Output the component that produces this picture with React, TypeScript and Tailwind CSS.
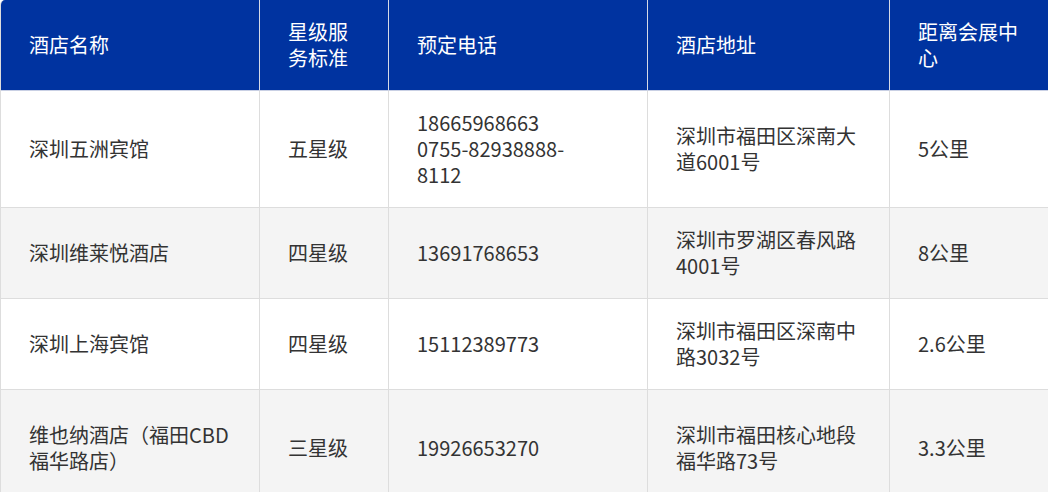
import React from 'react';

type Hotel = {
  name: string;
  star: string;
  phone: string[];
  address: string;
  distance: string;
};

const hotels: Hotel[] = [
  { name: '深圳五洲宾馆', star: '五星级', phone: ['18665968663', '0755-82938888-', '8112'], address: '深圳市福田区深南大道6001号', distance: '5公里' },
  { name: '深圳维莱悦酒店', star: '四星级', phone: ['13691768653'], address: '深圳市罗湖区春风路4001号', distance: '8公里' },
  { name: '深圳上海宾馆', star: '四星级', phone: ['15112389773'], address: '深圳市福田区深南中路3032号', distance: '2.6公里' },
  { name: '维也纳酒店（福田CBD福华路店）', star: '三星级', phone: ['19926653270'], address: '深圳市福田核心地段福华路73号', distance: '3.3公里' },
];

const cell = 'border-r border-b border-[#dddddd] px-[28px] py-[19px] align-middle text-left';

export default function App() {
  return (
    <div
      className="w-[1048px] h-[492px] overflow-hidden bg-white"
      style={{ fontFamily: '"Noto Sans CJK SC", "Noto Sans", sans-serif' }}
    >
      <div className="w-[1070px] rounded-tl-[5px] overflow-hidden border-l border-[#dddddd]">
        <table className="w-[1069px] table-fixed border-separate border-spacing-0 text-[20px] leading-[26px]">
          <colgroup>
            <col className="w-[259px]" />
            <col className="w-[129px]" />
            <col className="w-[259px]" />
            <col className="w-[242px]" />
            <col className="w-[180px]" />
          </colgroup>
          <thead>
            <tr className="bg-[#0033a0] text-white">
              <th className={`${cell} font-normal border-r-[#d5d9e6] border-b-[#c9d0e4]`}>酒店名称</th>
              <th className={`${cell} font-normal border-r-[#d5d9e6] border-b-[#c9d0e4]`}>星级服务标准</th>
              <th className={`${cell} font-normal border-r-[#d5d9e6] border-b-[#c9d0e4]`}>预定电话</th>
              <th className={`${cell} font-normal border-r-[#d5d9e6] border-b-[#c9d0e4]`}>酒店地址</th>
              <th className={`${cell} font-normal border-r-[#d5d9e6] border-b-[#c9d0e4] pr-[49px]`}>距离会展中心</th>
            </tr>
          </thead>
          <tbody className="text-[#333333]">
            {hotels.map((h, i) => (
              <tr key={h.name} className={i % 2 === 1 ? 'bg-[#f4f4f4]' : 'bg-white'}>
                <td className={`${cell} ${i === 3 ? 'h-[117px]' : ''}`}>{h.name}</td>
                <td className={cell}>{h.star}</td>
                <td className={cell}>
                  {h.phone.map((p) => (
                    <div key={p}>{p}</div>
                  ))}
                </td>
                <td className={cell}>{h.address}</td>
                <td className={cell}>{h.distance}</td>
              </tr>
            ))}
          </tbody>
        </table>
      </div>
    </div>
  );
}
